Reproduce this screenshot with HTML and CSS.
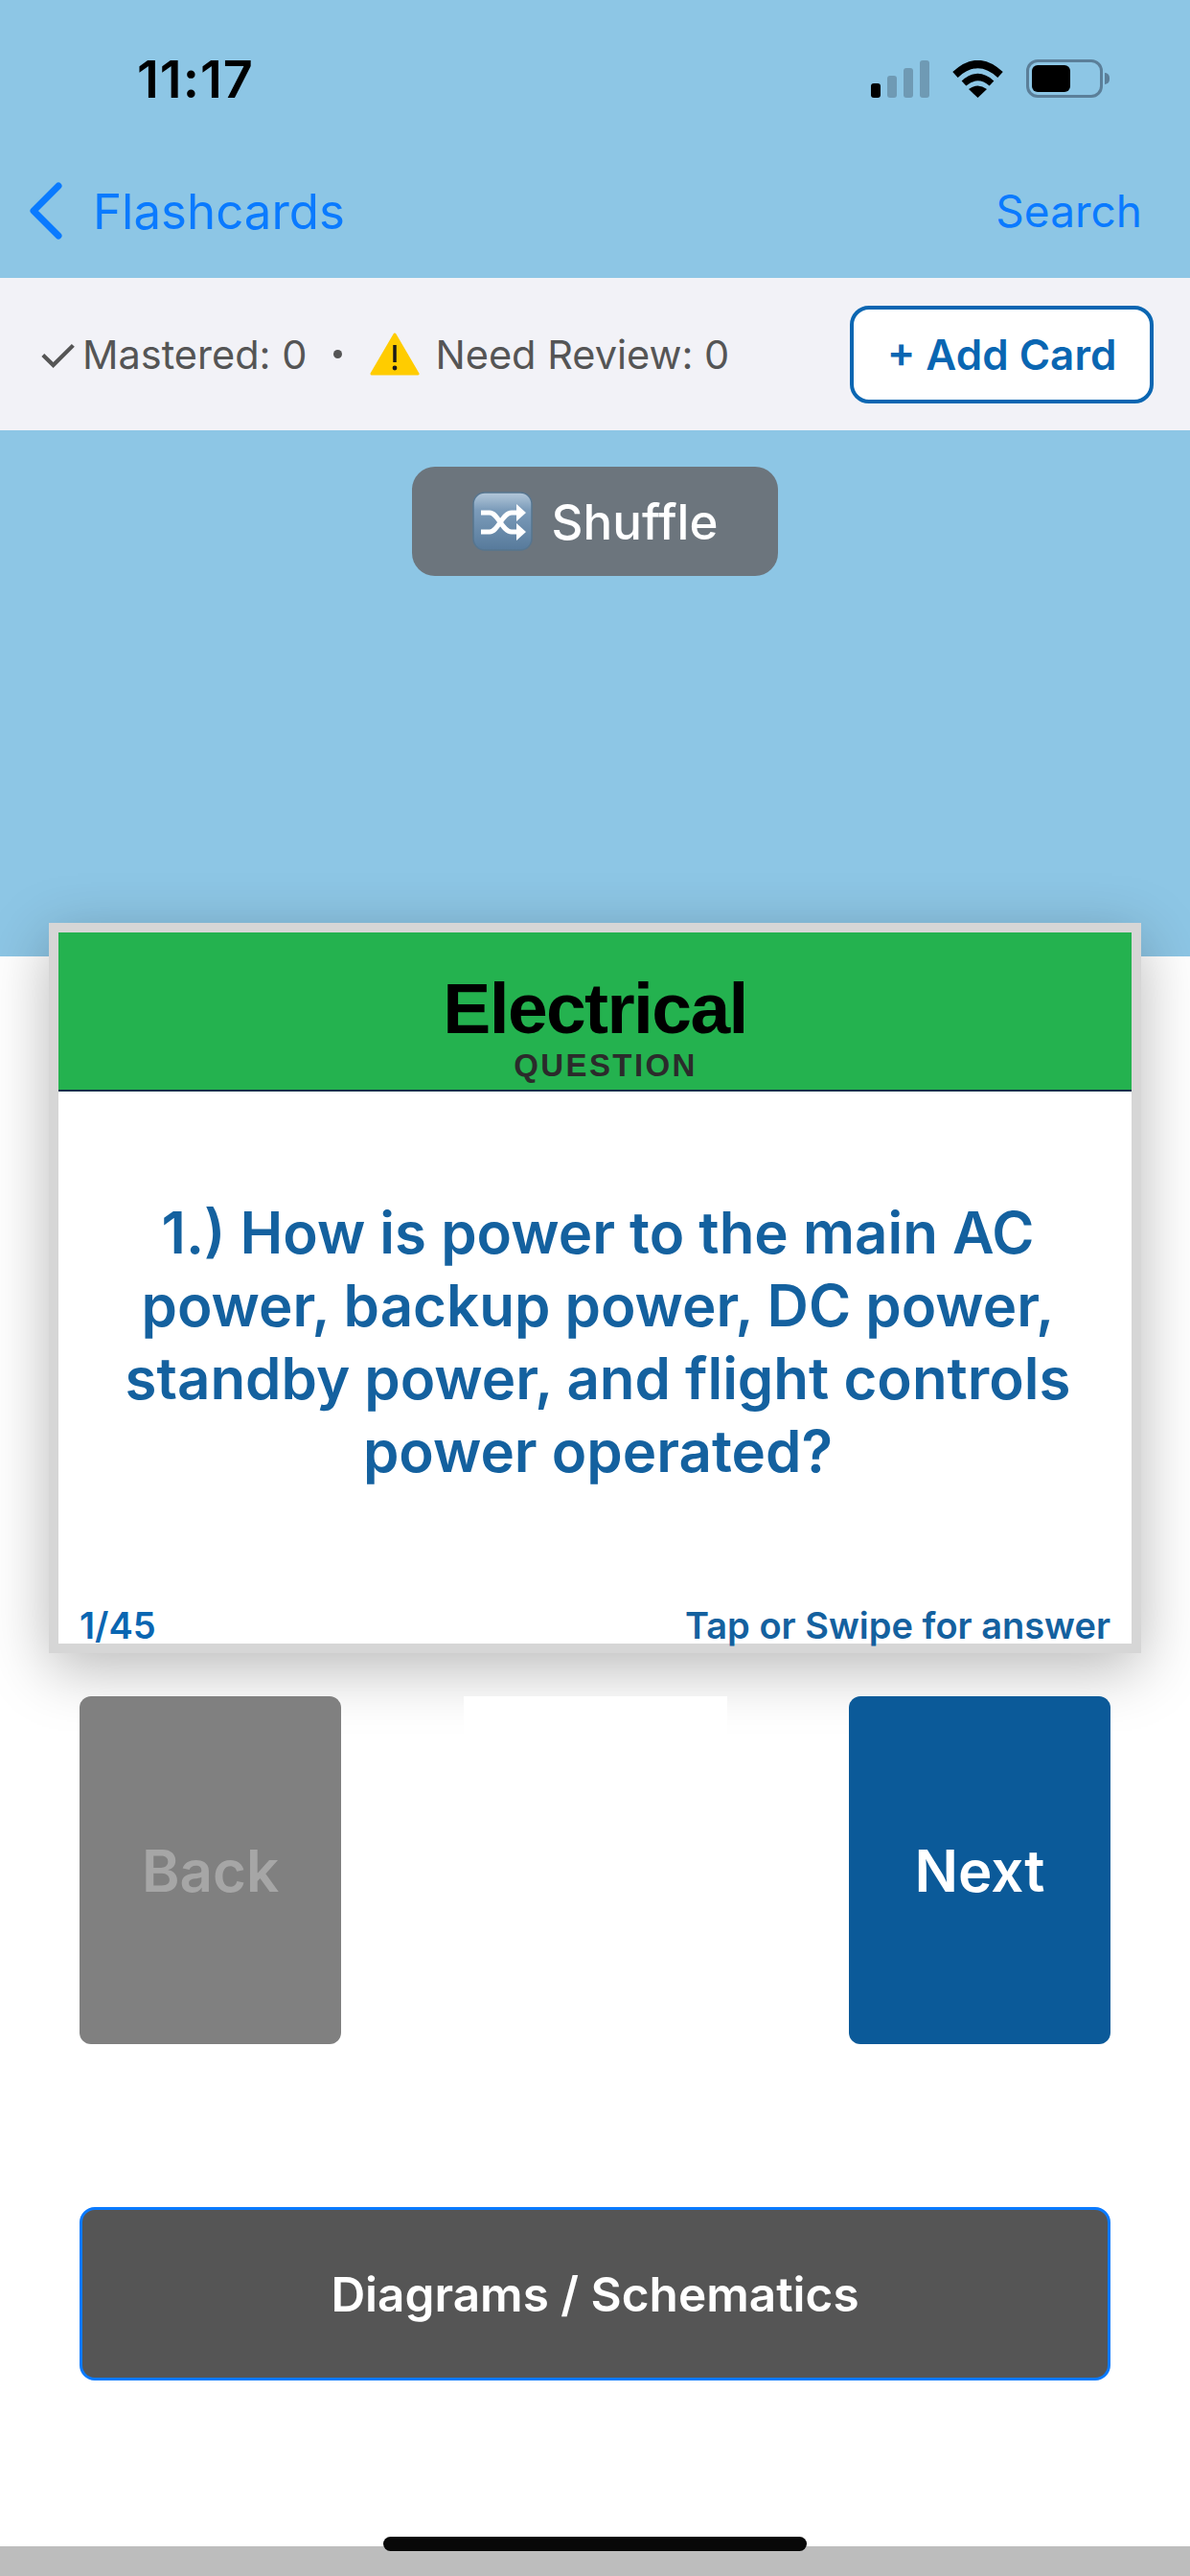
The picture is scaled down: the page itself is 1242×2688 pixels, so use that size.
FILE: index.html
```html
<!DOCTYPE html>
<html lang="en">
<head>
    <meta charset="UTF-8">
    <meta name="viewport" content="width=device-width, initial-scale=1.0">
    <title>Electrical Flashcards</title>
    <link rel="stylesheet" href="styles.css">
</head>
<body>
    <div class="screen">
        <div class="status-bar">
            <span class="time">11:17</span>
            <div class="status-icons">
                <div class="signal">
                    <span class="bar bar-1 on"></span>
                    <span class="bar bar-2"></span>
                    <span class="bar bar-3"></span>
                    <span class="bar bar-4"></span>
                </div>
                <svg class="wifi" width="53" height="39" viewBox="0 0 53 39">
                    <path d="M3 15Q26.5 -7 50 15" fill="none" stroke="#000" stroke-width="8"/>
                    <path d="M12 24Q26.5 11 41 24" fill="none" stroke="#000" stroke-width="7"/>
                    <path d="M17 30Q26.5 23 36 30L26.5 39Z" fill="#000"/>
                </svg>
                <div class="battery">
                    <div class="battery-body"><span class="battery-level"></span></div>
                    <span class="battery-cap"></span>
                </div>
            </div>
        </div>

        <div class="nav-bar">
            <a class="back-link">
                <svg width="35" height="60" viewBox="0 0 35 60">
                    <path d="M31 4L5 30L31 56" fill="none" stroke="#0a7aff" stroke-width="7" stroke-linecap="round" stroke-linejoin="round"/>
                </svg>
                <span>Flashcards</span>
            </a>
            <a class="search-link">Search</a>
        </div>

        <div class="stats-bar">
            <div class="stats">
                <span class="check">✓</span>
                <span>Mastered: 0</span>
                <span class="stats-dot"></span>
                <svg class="warn-icon" width="52" height="45" viewBox="0 0 52 45">
                    <path d="M26 2L50 43H2Z" fill="#ffcc00" stroke="#ffcc00" stroke-width="3" stroke-linejoin="round"/>
                    <path d="M26 13V31" stroke="#1a1a1a" stroke-width="3.5"/>
                    <circle cx="26" cy="37" r="2.4" fill="#1a1a1a"/>
                </svg>
                <span>Need Review: 0</span>
            </div>
            <button class="add-card">+ Add Card</button>
        </div>

        <div class="shuffle-row">
            <button class="shuffle">
                <svg width="63" height="62" viewBox="0 0 63 62">
                    <defs>
                        <linearGradient id="emojiBg" x1="0" y1="0" x2="0" y2="1">
                            <stop offset="0" stop-color="#b4c8da"/>
                            <stop offset="0.3" stop-color="#7c9cba"/>
                            <stop offset="1" stop-color="#577a9b"/>
                        </linearGradient>
                    </defs>
                    <rect x="1" y="1" width="61" height="60" rx="12" fill="url(#emojiBg)" stroke="#56758f" stroke-width="1.5"/>
                    <path d="M9 22H18C27 22 31 42 41 42H47M9 42H18C27 42 31 22 41 22H47" fill="none" stroke="#fff" stroke-width="5"/>
                    <path d="M46 13L56 22L46 31ZM46 33L56 42L46 51Z" fill="#fff"/>
                </svg>
                <span>Shuffle</span>
            </button>
        </div>

        <section class="card">
            <header class="card-head">
                <h1>Electrical</h1>
                <h2>QUESTION</h2>
            </header>
            <p class="card-question">1.) How is power to the main AC power, backup power, DC power, standby power, and flight controls power operated?</p>
            <footer class="card-foot">
                <span class="card-count">1/45</span>
                <span>Tap or Swipe for answer</span>
            </footer>
        </section>

        <div class="card-nav">
            <button class="nav-btn back" disabled>Back</button>
            <div class="nav-spacer"></div>
            <button class="nav-btn next">Next</button>
        </div>

        <button class="diagrams">Diagrams / Schematics</button>

        <div class="bottom-bar"><span class="home-indicator"></span></div>
    </div>
</body>
</html>
```

FILE: styles.css
```css
:root {
    --color-sky: #8dc6e5;
    --color-link: #0a7aff;
    --color-navy: #0b5a99;
    --color-text: #14619f;
}
* {
    box-sizing: border-box;
}
html, body {
    margin: 0;
    padding: 0;
}
body {
    font-family: 'Inter', 'Liberation Sans', sans-serif;
    background-color: white;
}
button {
    font-family: inherit;
    padding: 0;
}
.screen {
    position: relative;
    width: 1242px;
    height: 2688px;
    overflow: hidden;
    display: flex;
    flex-direction: column;
    background: linear-gradient(var(--color-sky) 998px, white 998px);
}

/* status bar */
.status-bar {
    height: 164px;
    display: flex;
    align-items: center;
    justify-content: space-between;
    padding: 0 84px 0 143px;
}
.time {
    font-size: 54px;
    font-weight: 600;
    color: #000;
    letter-spacing: 1px;
}
.status-icons {
    display: flex;
    align-items: center;
    gap: 24px;
}
.signal {
    display: flex;
    align-items: flex-end;
    gap: 7px;
    height: 39px;
}
.bar {
    width: 10px;
    border-radius: 3px;
    background-color: #6f9ab4;
}
.bar.on {
    background-color: #000;
}
.bar-1 { height: 15px; }
.bar-2 { height: 23px; }
.bar-3 { height: 31px; }
.bar-4 { height: 39px; }
.battery {
    display: flex;
    align-items: center;
    gap: 2px;
}
.battery-body {
    width: 80px;
    height: 40px;
    border: 3px solid #5b7f99;
    border-radius: 12px;
    padding: 3px;
}
.battery-level {
    display: block;
    width: 40px;
    height: 100%;
    background-color: #000;
    border-radius: 6px;
}
.battery-cap {
    width: 5px;
    height: 12px;
    background-color: #5b7f99;
    border-radius: 0 6px 6px 0;
}

/* nav bar */
.nav-bar {
    height: 126px;
    display: flex;
    align-items: center;
    justify-content: space-between;
    padding: 0 50px 14px 30px;
    color: var(--color-link);
}
.back-link {
    display: flex;
    align-items: center;
    gap: 32px;
    font-size: 51px;
}
.search-link {
    font-size: 46px;
}

/* stats */
.stats-bar {
    height: 159px;
    display: flex;
    align-items: center;
    justify-content: space-between;
    padding: 0 38px 0 38px;
    background-color: #f2f2f7;
}
.stats {
    display: flex;
    align-items: center;
    font-size: 41.5px;
    color: #555;
}
.check {
    width: 48px;
    font-size: 50px;
}
.stats-dot {
    width: 9px;
    height: 9px;
    border-radius: 50%;
    background-color: #555;
    margin: 0 29px 0 28px;
}
.warn-icon {
    margin-right: 16px;
}
.add-card {
    width: 317px;
    height: 102px;
    background-color: white;
    border: 4px solid #0a66b2;
    border-radius: 20px;
    color: #0a66b2;
    font-size: 44px;
    font-weight: 600;
}

/* shuffle */
.shuffle-row {
    height: 514px;
    padding-top: 38px;
    display: flex;
    justify-content: center;
}
.shuffle {
    width: 382px;
    height: 114px;
    display: flex;
    align-items: center;
    justify-content: center;
    gap: 20px;
    background-color: #6c757d;
    border: none;
    border-radius: 24px;
    color: white;
    font-size: 51px;
    font-weight: 500;
}

/* card */
.card {
    width: 1140px;
    height: 762px;
    margin: 0 51px;
    border: 10px solid #d6d6d6;
    background-color: white;
    box-shadow: 0 16px 60px rgba(0,0,0,0.28);
    display: flex;
    flex-direction: column;
}
.card-head {
    height: 166px;
    background-color: #24b24f;
    border-bottom: 2px solid #14304a;
    text-align: center;
    font-family: 'Liberation Sans', Arial, sans-serif;
    padding-top: 41px;
}
.card-head h1 {
    margin: 0;
    font-size: 75px;
    line-height: 76px;
    font-weight: 700;
    letter-spacing: -1.6px;
    color: #000;
}
.card-head h2 {
    margin: 0;
    padding: 4px 0 0 22px;
    font-size: 33px;
    line-height: 36px;
    font-weight: 700;
    letter-spacing: 2.4px;
    color: #2b2b2b;
}
.card-question {
    flex: 1;
    margin: 0;
    padding: 109px 26px 0 32px;
    text-align: center;
    font-size: 60px;
    line-height: 76px;
    font-weight: 600;
    color: var(--color-text);
}
.card-foot {
    display: flex;
    justify-content: space-between;
    padding: 7px 22px 0 22px;
    height: 44px;
    font-size: 38px;
    line-height: 36px;
    font-weight: 600;
    color: var(--color-text);
}
.card-count {
    color: #0a66b2;
}

/* back / next */
.card-nav {
    position: relative;
    height: 363px;
    margin: 45px 83px 0;
    display: flex;
    justify-content: space-between;
}
.nav-btn {
    width: 273px;
    height: 100%;
    border: none;
    border-radius: 12px;
    font-size: 60px;
    font-weight: 600;
    color: white;
}
.nav-btn.back {
    background-color: #808080;
    color: #a6a6a6;
}
.nav-btn.next {
    background-color: var(--color-navy);
}
.nav-spacer {
    width: 275px;
    background-color: white;
}

/* diagrams */
.diagrams {
    height: 181px;
    margin: 170px 83px 0;
    background-color: #555;
    border: 3px solid var(--color-link);
    border-radius: 16px;
    color: white;
    font-size: 49.5px;
    font-weight: 600;
}

/* home indicator */
.bottom-bar {
    position: absolute;
    left: 0;
    right: 0;
    bottom: 0;
    height: 31px;
    background-color: #bdbdbd;
}
.home-indicator {
    position: absolute;
    left: 400px;
    top: -10px;
    width: 442px;
    height: 15px;
    background-color: #080808;
    border-radius: 8px;
}
```
